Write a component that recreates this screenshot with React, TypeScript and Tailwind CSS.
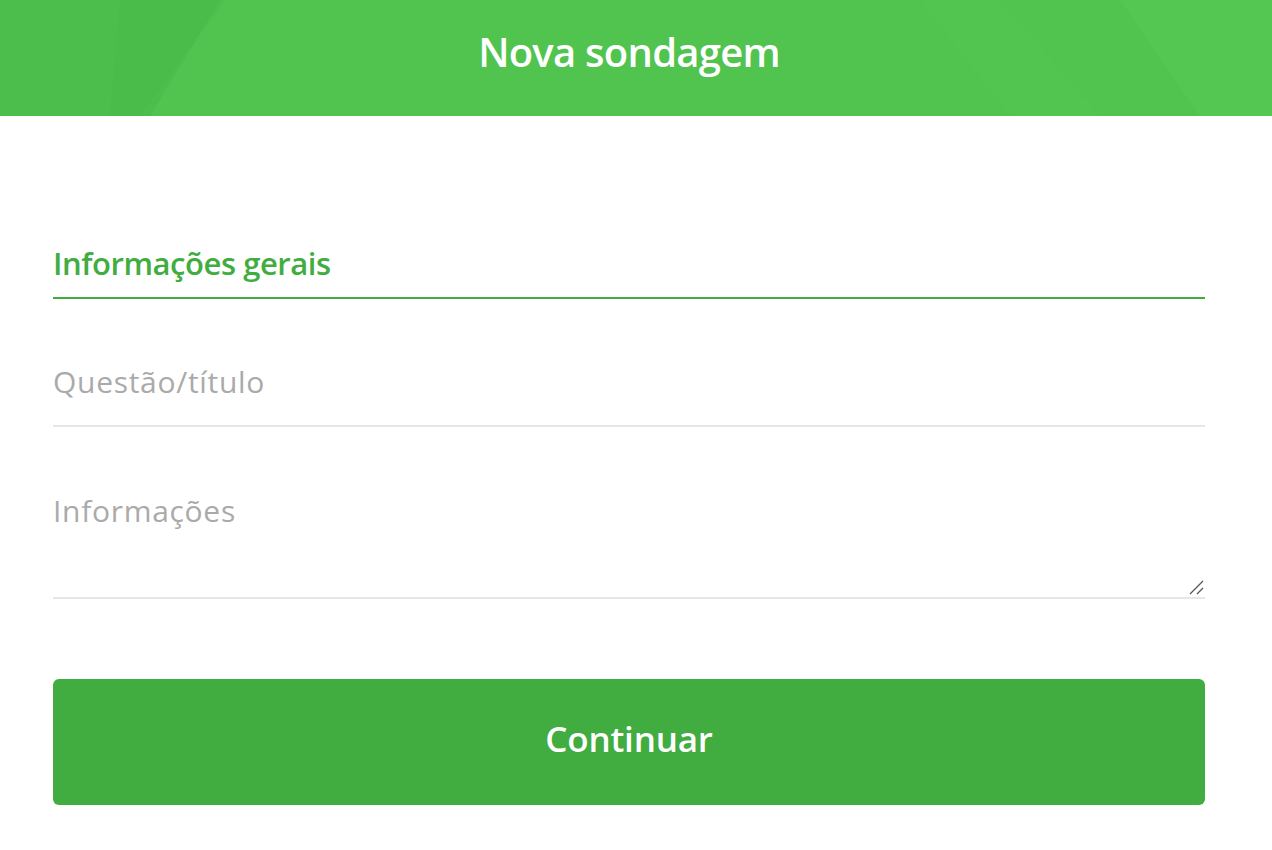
import React from "react";

const font = { fontFamily: '"Open Sans", "Noto Sans", sans-serif' };

export default function App() {
  return (
    <div className="w-[1272px] min-h-[850px] bg-white" style={font}>
      <header className="relative h-[116px] overflow-hidden bg-[#51c34f] flex items-center justify-center pb-[13px] pr-[14px]">
        <svg className="absolute inset-0 w-full h-full" viewBox="0 0 1272 116" preserveAspectRatio="none">
          <polygon points="0,0 220,0 150,116 0,116" fill="#49b948" opacity="0.55" />
          <polygon points="120,0 225,0 140,116 110,116" fill="#48b847" opacity="0.4" />
          <polygon points="1120,0 1272,0 1272,116 1200,116" fill="#57c955" opacity="0.5" />
          <polygon points="920,0 1010,116 1100,116 1000,0" fill="#55c753" opacity="0.3" />
        </svg>
        <h1 className="relative text-white text-[40px] font-semibold leading-none tracking-[-0.75px]">Nova sondagem</h1>
      </header>

      <main className="ml-[53px] w-[1152px] pt-[128px]">
        <div className="h-[55px] border-b-2 border-[#41ad40]">
          <h2 className="text-[#41ad40] text-[31px] font-semibold leading-[38px] tracking-[-0.45px]">Informações gerais</h2>
        </div>

        <div className="mt-[63px] h-[65px] border-b-2 border-[#e6e6e6]">
          <div className="text-[#aaaaaa] text-[30px] font-normal leading-[40px] tracking-[0.7px]">Questão/título</div>
        </div>

        <div className="relative mt-[64px] h-[108px] border-b-2 border-[#e6e6e6]">
          <div className="text-[#aaaaaa] text-[30px] font-normal leading-[40px] tracking-[0.7px]">Informações</div>
          <svg className="absolute right-[1px] bottom-[1px] w-[16px] h-[16px]" viewBox="0 0 16 16">
            <line x1="2" y1="14" x2="15" y2="1" stroke="#555" strokeWidth="1.3" />
            <line x1="9" y1="14" x2="15" y2="8" stroke="#555" strokeWidth="1.3" />
          </svg>
        </div>

        <button className="mt-[80px] w-full h-[126px] rounded-[6px] bg-[#41ac40] text-white text-[35px] font-semibold tracking-[-0.2px] flex items-center justify-center pb-[6px]">
          Continuar
        </button>
      </main>
    </div>
  );
}
